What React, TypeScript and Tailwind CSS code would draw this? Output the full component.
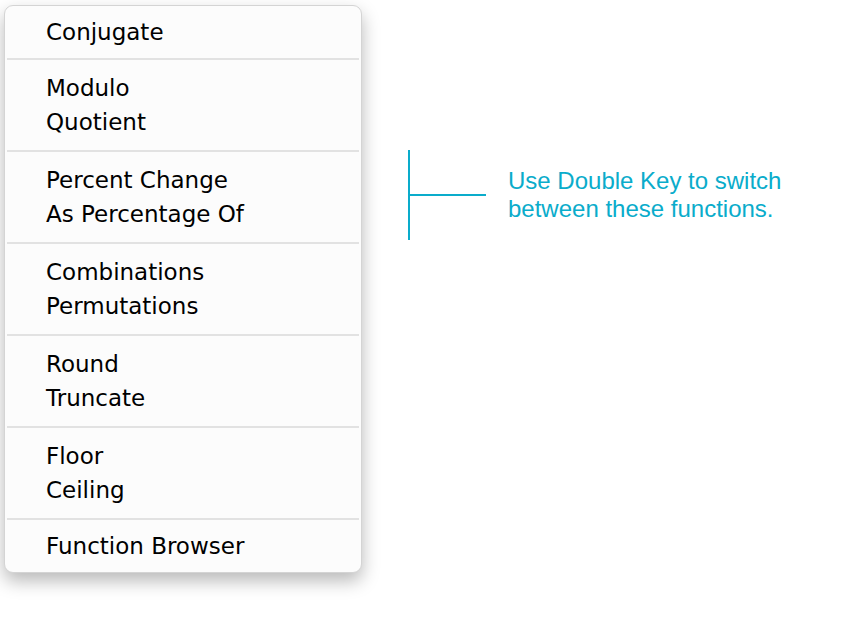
import React from "react"

const groups: string[][] = [
  ["Conjugate"],
  ["Modulo", "Quotient"],
  ["Percent Change", "As Percentage Of"],
  ["Combinations", "Permutations"],
  ["Round", "Truncate"],
  ["Floor", "Ceiling"],
  ["Function Browser"],
]

export default function App() {
  return (
    <div className="w-[860px] h-[620px] bg-white relative flex items-start">
      <div className="ml-[4px] mt-[5px] w-[358px] rounded-[9px] bg-[#fcfcfc] border border-[#d4d4d4] shadow-[0_8px_18px_rgba(0,0,0,0.28)] flex flex-col overflow-hidden">
        {groups.map((g, i) => (
          <React.Fragment key={i}>
            {i > 0 && <div className="mx-[2px] h-[2px] bg-[#e2e2e2]" />}
            <div
              className={`flex flex-col justify-center pl-[41px] text-[23px] leading-[34px] text-black ${
                g.length === 1 ? "h-[52px]" : "h-[90px]"
              }`}
              style={{ fontFamily: '"DejaVu Sans", Verdana, sans-serif' }}
            >
              {g.map((t) => (
                <div key={t}>{t}</div>
              ))}
            </div>
          </React.Fragment>
        ))}
      </div>

      <div className="ml-[46px] mt-[150px] flex items-center">
        <div className="w-[2px] h-[90px] bg-[#0aaccb]" />
        <div className="w-[76px] h-[2px] bg-[#0aaccb]" />
        <div
          className="ml-[22px] text-[24px] leading-[28px] text-[#0aaccb]"
          style={{ fontFamily: '"Liberation Sans", Arial, sans-serif' }}
        >
          <div>Use Double Key to switch</div>
          <div>between these functions.</div>
        </div>
      </div>
    </div>
  )
}
